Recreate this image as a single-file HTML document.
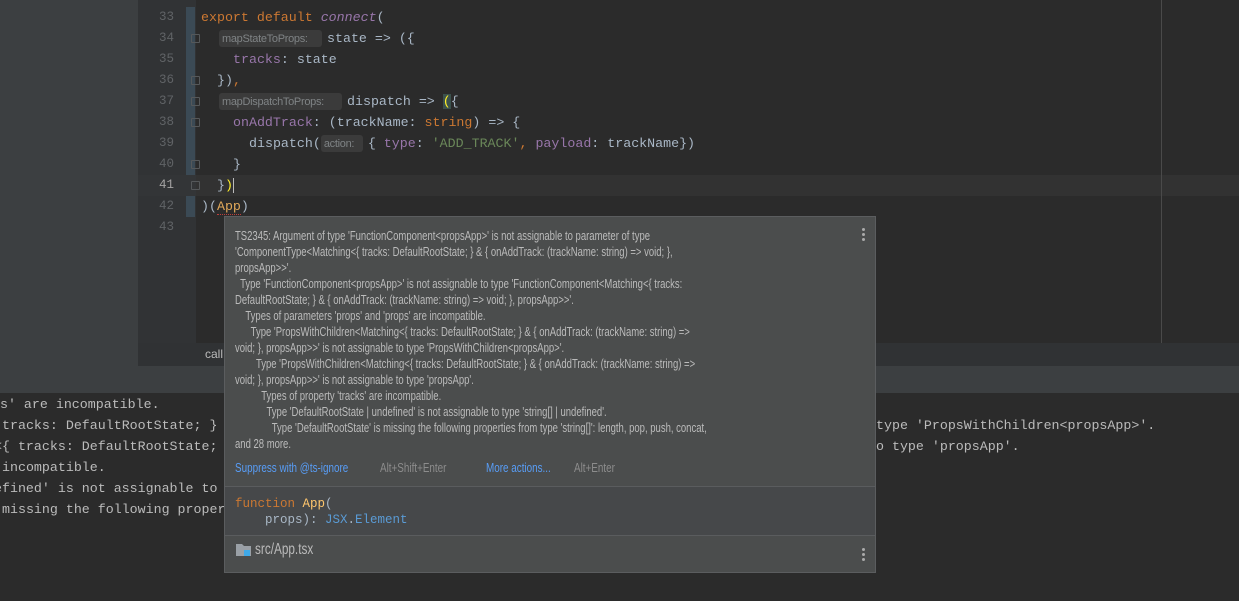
<!DOCTYPE html>
<html><head><meta charset="utf-8">
<style>
*{margin:0;padding:0;box-sizing:border-box}
body{width:1239px;height:601px;overflow:hidden;background:#2b2b2b;position:relative;font-family:"Liberation Sans",sans-serif}
.abs{position:absolute}
.mono{font-family:"Liberation Mono","DejaVu Sans Mono",monospace;font-size:13.3px;white-space:pre}
.ln{position:absolute;left:138px;width:36px;text-align:right;color:#606366;font-family:"Liberation Mono",monospace;font-size:12.5px;height:21px;line-height:21px}
.cl{position:absolute;left:201px;height:21px;line-height:21px;color:#a9b7c6}
.kw{color:#cc7832}.fn{color:#9876aa;font-style:italic}.pr{color:#9876aa}.st{color:#6a8759}.ty{color:#cc7832}
.hint{font-family:"Liberation Sans",sans-serif;font-size:11px;letter-spacing:-0.3px;color:#7f8385;background:#3b3b3b;border-radius:3px;padding:2px 3px 0;margin-right:5px;display:inline-block;height:17px;line-height:15px;vertical-align:top;overflow:hidden;position:relative;top:2px}
.pt{position:absolute;left:235px;font-size:12.5px;color:#bbbbbb;line-height:16px;white-space:pre;transform:scaleX(0.76);transform-origin:left top}
.con{position:absolute;color:#bbbbbb;height:21px;line-height:21px}
.fold{position:absolute;left:191px;width:9px;height:9px;border:1px solid #55585a;border-radius:1px}
</style></head><body>
<div class="abs" style="left:0;top:0;width:138px;height:366px;background:#3c3f41"></div>
<div class="abs" style="left:138px;top:0;width:58px;height:343px;background:#313335"></div>
<div class="abs" style="left:186px;top:7px;width:9px;height:210px;background:#3b4a55"></div>
<div class="abs" style="left:196px;top:175px;width:1043px;height:21px;background:#323232"></div>
<div class="abs" style="left:138px;top:175px;width:58px;height:21px;background:#333537"></div>
<div class="abs" style="left:1161px;top:0;width:1px;height:343px;background:#4a4a4a"></div>
<div class="ln" style="top:7px">33</div><div class="ln" style="top:28px">34</div><div class="ln" style="top:49px">35</div><div class="ln" style="top:70px">36</div><div class="ln" style="top:91px">37</div><div class="ln" style="top:112px">38</div><div class="ln" style="top:133px">39</div><div class="ln" style="top:154px">40</div><div class="ln" style="top:175px;color:#a4a3a3">41</div><div class="ln" style="top:196px">42</div><div class="ln" style="top:217px">43</div>
<div class="fold" style="top:34px"></div><div class="fold" style="top:76px"></div><div class="fold" style="top:97px"></div><div class="fold" style="top:118px"></div><div class="fold" style="top:160px"></div><div class="fold" style="top:181px"></div>
<div class="cl mono" style="top:7px"><span class="kw">export default </span><span class="fn">connect</span>(</div>
<div class="cl mono" style="top:28px;left:219px"><span class="hint" style="width:103px">mapStateToProps:</span>state =&gt; ({</div>
<div class="cl mono" style="top:49px;left:233px"><span class="pr">tracks</span>: state</div>
<div class="cl mono" style="top:70px;left:217px">})<span class="kw">,</span></div>
<div class="cl mono" style="top:91px;left:219px"><span class="hint" style="width:123px">mapDispatchToProps:</span>dispatch =&gt; <span style="background:#3b514d;color:#ffef28">(</span>{</div>
<div class="cl mono" style="top:112px;left:233px"><span class="pr">onAddTrack</span>: (trackName: <span class="ty">string</span>) =&gt; {</div>
<div class="cl mono" style="top:133px;left:249px">dispatch(<span class="hint" style="width:42px">action:</span>{ <span class="pr">type</span>: <span class="st">'ADD_TRACK'</span><span class="kw">,</span> <span class="pr">payload</span>: trackName})</div>
<div class="cl mono" style="top:154px;left:233px">}</div>
<div class="cl mono" style="top:175px;left:217px">}<span style="color:#ffef28;border-right:1px solid #bbb">)</span></div>
<div class="cl mono" style="top:196px">)(<span style="color:#e0a85a;border-bottom:1px dotted #bc3f3c">App</span>)</div>
<div class="abs" style="left:138px;top:343px;width:1101px;height:23px;background:#303234"></div>
<div class="abs" style="left:205px;top:347px;font-size:12px;color:#bbbbbb">call</div>
<div class="abs" style="left:0;top:366px;width:1239px;height:27px;background:#3c3f41"></div>
<div class="con mono" style="left:-8px;top:394px">ps' are incompatible.</div>
<div class="con mono" style="left:2px;top:415px">tracks: DefaultRootState; }</div>
<div class="con mono" style="left:-6px;top:436px">&lt;{ tracks: DefaultRootState;</div>
<div class="con mono" style="left:876px;top:415px">type 'PropsWithChildren&lt;propsApp&gt;'.</div>
<div class="con mono" style="left:876px;top:436px">o type 'propsApp'.</div>
<div class="con mono" style="left:2px;top:457px">incompatible.</div>
<div class="con mono" style="left:-6px;top:478px">efined' is not assignable to</div>
<div class="con mono" style="left:2px;top:499px">missing the following proper</div>
<div class="abs" style="left:224px;top:216px;width:652px;height:357px;background:#4b4d4d;border:1px solid #5b5d5f"></div>
<div class="abs" style="left:225px;top:486px;width:650px;height:1px;background:#5a5c5e"></div>
<div class="abs" style="left:225px;top:487px;width:650px;height:48px;background:#46484a"></div>
<div class="abs" style="left:225px;top:535px;width:650px;height:1px;background:#5a5c5e"></div>
<div class="pt" style="top:228px">TS2345: Argument of type 'FunctionComponent&lt;propsApp&gt;' is not assignable to parameter of type
'ComponentType&lt;Matching&lt;{ tracks: DefaultRootState; } &amp; { onAddTrack: (trackName: string) =&gt; void; },
propsApp&gt;&gt;'.
  Type 'FunctionComponent&lt;propsApp&gt;' is not assignable to type 'FunctionComponent&lt;Matching&lt;{ tracks:
DefaultRootState; } &amp; { onAddTrack: (trackName: string) =&gt; void; }, propsApp&gt;&gt;'.
    Types of parameters 'props' and 'props' are incompatible.
      Type 'PropsWithChildren&lt;Matching&lt;{ tracks: DefaultRootState; } &amp; { onAddTrack: (trackName: string) =&gt;
void; }, propsApp&gt;&gt;' is not assignable to type 'PropsWithChildren&lt;propsApp&gt;'.
        Type 'PropsWithChildren&lt;Matching&lt;{ tracks: DefaultRootState; } &amp; { onAddTrack: (trackName: string) =&gt;
void; }, propsApp&gt;&gt;' is not assignable to type 'propsApp'.
          Types of property 'tracks' are incompatible.
            Type 'DefaultRootState | undefined' is not assignable to type 'string[] | undefined'.
              Type 'DefaultRootState' is missing the following properties from type 'string[]': length, pop, push, concat,
and 28 more.</div>
<div class="pt" style="top:460px;color:#589df6;font-size:13px">Suppress with @ts-ignore</div>
<div class="pt" style="top:460px;left:380px;color:#8c8c8c;font-size:13px">Alt+Shift+Enter</div>
<div class="pt" style="top:460px;left:486px;color:#589df6;font-size:13px">More actions...</div>
<div class="pt" style="top:460px;left:574px;color:#8c8c8c;font-size:13px">Alt+Enter</div>
<div class="abs mono" style="left:235px;top:496px;font-size:12.5px;line-height:16px;color:#a9b7c6"><span class="kw">function</span> <span style="color:#ffc66d">App</span>(
    props): <span style="color:#5a9bd5">JSX</span>.<span style="color:#5a9bd5">Element</span></div>
<svg class="abs" style="left:236px;top:543px" width="16" height="14"><path d="M0 1h6l2 2h7v10H0z" fill="#9aa0a6"/><rect x="8" y="7" width="6" height="6" fill="#3fa9e8"/></svg>
<div class="pt" style="left:255px;top:542px;font-size:15.5px">src/App.tsx</div>
<div class="abs" style="left:862px;top:228px;width:3px;font-size:0"><div style="width:3px;height:3px;background:#aaa;border-radius:50%;margin-bottom:2px"></div><div style="width:3px;height:3px;background:#aaa;border-radius:50%;margin-bottom:2px"></div><div style="width:3px;height:3px;background:#aaa;border-radius:50%"></div></div>
<div class="abs" style="left:862px;top:548px;width:3px;font-size:0"><div style="width:3px;height:3px;background:#aaa;border-radius:50%;margin-bottom:2px"></div><div style="width:3px;height:3px;background:#aaa;border-radius:50%;margin-bottom:2px"></div><div style="width:3px;height:3px;background:#aaa;border-radius:50%"></div></div>
</body></html>
